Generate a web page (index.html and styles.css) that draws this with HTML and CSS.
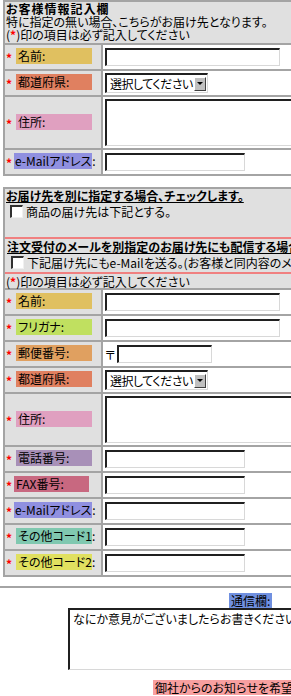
FILE: index.html
```html
<!DOCTYPE html>
<html lang="ja">
<head>
  <meta charset="utf-8">
  <meta name="viewport" content="width=device-width, initial-scale=1.0">
<link rel="stylesheet" href="styles.css">
</head>
<body>

<div class="page">

<!-- ご注文者情報 -->
<table class="form-tbl">
  <tr>
    <td colspan="2" class="head">
      <b class="title">お客様情報記入欄</b><br>
      特に指定の無い場合、こちらがお届け先となります。<br>
      (<span class="req">*</span>)印の項目は必ず記入してください
    </td>
  </tr>
  <tr>
    <td class="lbl"><span class="req">*</span><span class="tag c-name">名前:</span></td>
    <td class="fld"><input type="text" class="txt"></td>
  </tr>
  <tr>
    <td class="lbl"><span class="req">*</span><span class="tag c-pref">都道府県:</span></td>
    <td class="fld fld-sel">
      <span class="sel"><select><option>選択してください</option></select><span class="sel-btn"></span></span>
    </td>
  </tr>
  <tr>
    <td class="lbl"><span class="req">*</span><span class="tag c-addr">住所:</span></td>
    <td class="fld fld-area"><textarea class="area"></textarea></td>
  </tr>
  <tr>
    <td class="lbl"><span class="req">*</span><span class="tag fit c-mail">e-Mailアドレス</span>:</td>
    <td class="fld"><input type="text" class="txt short"></td>
  </tr>
</table>

<!-- お届け先 -->
<table class="form-tbl ship">
  <tr>
    <td colspan="2" class="head ship-head">
      <p class="sub-title">お届け先を別に指定する場合、チェックします。</p>
      <label class="chk-row"><input type="checkbox" class="chk">商品の届け先は下記とする。</label>
      <div class="mail-box">
        <p class="sub-title">注文受付のメールを別指定のお届け先にも配信する場合</p>
        <label class="chk-row"><input type="checkbox" class="chk">下記届け先にもe-Mailを送る。(お客様と同内容のメールが届きます)</label>
      </div>
      <p class="note">(<span class="req">*</span>)印の項目は必ず記入してください</p>
    </td>
  </tr>
  <tr>
    <td class="lbl"><span class="req">*</span><span class="tag c-name">名前:</span></td>
    <td class="fld"><input type="text" class="txt"></td>
  </tr>
  <tr>
    <td class="lbl"><span class="req">*</span><span class="tag c-kana">フリガナ:</span></td>
    <td class="fld"><input type="text" class="txt"></td>
  </tr>
  <tr>
    <td class="lbl"><span class="req">*</span><span class="tag c-zip">郵便番号:</span></td>
    <td class="fld"><span class="zip-mark">〒</span><input type="text" class="txt zip"></td>
  </tr>
  <tr>
    <td class="lbl"><span class="req">*</span><span class="tag c-pref">都道府県:</span></td>
    <td class="fld fld-sel">
      <span class="sel"><select><option>選択してください</option></select><span class="sel-btn"></span></span>
    </td>
  </tr>
  <tr>
    <td class="lbl"><span class="req">*</span><span class="tag c-addr">住所:</span></td>
    <td class="fld fld-area"><textarea class="area"></textarea></td>
  </tr>
  <tr>
    <td class="lbl"><span class="req">*</span><span class="tag c-tel">電話番号:</span></td>
    <td class="fld"><input type="text" class="txt short"></td>
  </tr>
  <tr>
    <td class="lbl"><span class="req">*</span><span class="tag wide c-fax">FAX番号:</span></td>
    <td class="fld"><input type="text" class="txt short"></td>
  </tr>
  <tr>
    <td class="lbl"><span class="req">*</span><span class="tag fit c-mail">e-Mailアドレス</span>:</td>
    <td class="fld"><input type="text" class="txt short"></td>
  </tr>
  <tr>
    <td class="lbl"><span class="req">*</span><span class="tag c-code1">その他コード1:</span></td>
    <td class="fld"><input type="text" class="txt short"></td>
  </tr>
  <tr>
    <td class="lbl"><span class="req">*</span><span class="tag c-code2">その他コード2:</span></td>
    <td class="fld"><input type="text" class="txt short"></td>
  </tr>
</table>

</div>

<!-- 通信欄 -->
<div class="comm">
  <span class="tag c-comm">通信欄:</span>
  <textarea class="comm-area">なにか意見がございましたらお書きください。</textarea>
  <span class="tag c-notice">御社からのお知らせを希望する</span>
</div>

</body>
</html>
```

FILE: styles.css
```css
html {
  -webkit-text-size-adjust: none;
  text-size-adjust: none;
}
html, body {
  overflow: hidden;
}
body {
  margin: 0;
  background: #fff;
  color: #000;
  font-family: "Noto Sans CJK JP", "Noto Sans", sans-serif;
  font-size: 12px;
  line-height: 13px;
  font-feature-settings: "palt";
}
.page {
  padding-left: 3px;
  width: 460px;
}
p {
  margin: 0;
}

.form-tbl {
  border-collapse: collapse;
  border: 2px solid #a4a4a4;
  width: 440px;
}
.form-tbl td {
  border: 2px solid #a4a4a4;
  vertical-align: middle;
}
.head {
  background: #e0e0e0;
  padding: 0 1px 2px;
}
.title {
  font-weight: bold;
  letter-spacing: 1px;
}
.req {
  color: #f00;
  font-weight: bold;
}
.lbl .req {
  vertical-align: -2px;
}

/* labels */
.lbl {
  background: #e0e0e0;
  width: 94px;
  padding: 0 1px;
  white-space: nowrap;
  line-height: 16px;
}
.tag {
  display: inline-block;
  width: 76px;
  line-height: 16px;
  margin-left: 4px;
  padding-left: 2px;
  box-sizing: border-box;
  white-space: nowrap;
  vertical-align: top;
}
.tag.wide {
  margin-left: 2px;
  width: 75px;
}
.tag.fit {
  margin-left: 2px;
  width: auto;
  padding: 0 1px;
}
.c-name  { background: #e0c060; }
.c-pref  { background: #e08060; }
.c-addr  { background: #e0a0c0; }
.c-mail  { background: #9090e0; }
.c-kana  { background: #c0e060; }
.c-zip   { background: #e0a060; }
.c-tel   { background: #a890b8; }
.c-fax   { background: #c86880; }
.c-code1 { background: #80c8b0; }
.c-code2 { background: #e0e060; }

/* inputs */
.fld {
  background: #fff;
  padding: 3px 2px;
}
.fld-sel,
.fld-area {
  padding: 2px;
}
.txt, .area, .comm-area, .sel {
  box-sizing: border-box;
  border-style: solid;
  border-width: 2px 1px 1px 2px;
  border-color: #202020 #d8d8d8 #d8d8d8 #202020;
  background: #fff;
  margin: 0;
  font: inherit;
}
.txt {
  display: block;
  width: 175px;
  height: 18px;
  padding: 0 2px;
}
.txt.short {
  width: 140px;
}
.txt.zip {
  display: inline-block;
  width: 95px;
  vertical-align: middle;
}
.zip-mark {
  display: inline-block;
  width: 12px;
  vertical-align: middle;
}
.area {
  display: block;
  width: 300px;
  height: 47px;
  resize: none;
}
.sel {
  display: flex;
  align-items: center;
  width: 103px;
  height: 20px;
}
.sel select {
  appearance: none;
  -webkit-appearance: none;
  border: 0;
  background: #fff;
  font: inherit;
  letter-spacing: -0.5px;
  padding: 0 0 0 3px;
  width: 87px;
  height: 16px;
  line-height: 16px;
}
.sel-btn {
  display: flex;
  align-items: center;
  justify-content: center;
  width: 12px;
  height: 14px;
  box-sizing: border-box;
  background: #c0c0c0;
  border: 1px solid;
  border-color: #fff #404040 #404040 #fff;
}
.sel-btn::after {
  content: "";
  border-left: 3px solid transparent;
  border-right: 3px solid transparent;
  border-top: 3px solid #000;
}

/* shipping head */
.ship {
  margin-top: 11px;
}
.ship-head {
  padding: 0 1px 0;
}
.sub-title {
  font-weight: bold;
  text-decoration: underline;
  white-space: nowrap;
}
.chk-row {
  display: flex;
  align-items: center;
  gap: 3px;
  height: 17px;
  margin-top: 1px;
  padding-left: 4px;
  white-space: nowrap;
}
.chk {
  appearance: none;
  -webkit-appearance: none;
  width: 13px;
  height: 13px;
  margin: 0;
  box-sizing: border-box;
  background: #fff;
  border-style: solid;
  border-width: 2px 1px 1px 2px;
  border-color: #303030 #f0f0f0 #f0f0f0 #303030;
  flex: none;
}
.mail-box {
  margin: 17px 0 0 -3px;
  padding: 1px 0 1px 2px;
  border: 2px solid #f08080;
}
.note {
  margin-top: 1px;
}

/* comments */
.comm {
  margin-top: 9px;
  border-top: 2px solid #a4a4a4;
  width: 480px;
  padding-top: 5px;
}
.comm .tag {
  width: auto;
  padding: 0 2px;
  line-height: 15px;
}
.c-comm {
  background: #7090e0;
  margin-left: 229px;
}
.comm-area {
  display: block;
  margin-left: 68px;
  width: 360px;
  height: 62px;
  padding: 2px 3px;
  resize: none;
}
.c-notice {
  background: #f8a0a0;
  margin: 10px 0 0 153px;
  line-height: 17px;
}
```
